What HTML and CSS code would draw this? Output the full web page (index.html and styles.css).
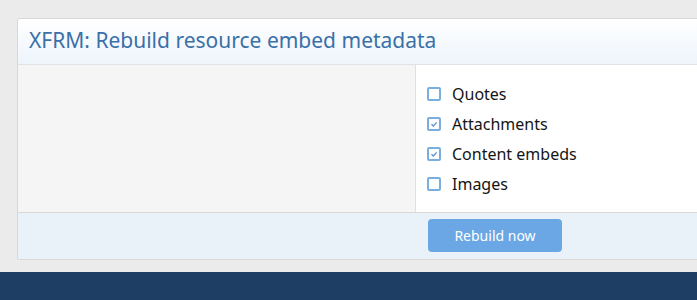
FILE: index.html
```html
<!DOCTYPE html>
<html lang="en">
<head>
    <meta charset="UTF-8">
    <title>Rebuild resource embed metadata</title>
    <link rel="stylesheet" href="styles.css">
</head>
<body>
    <div class="page">
        <div class="block">
            <h2 class="block-header">XFRM: Rebuild resource embed metadata</h2>
            <div class="block-body">
                <div class="row-label"></div>
                <div class="row-input">
                    <label class="check"><span class="box"></span>Quotes</label>
                    <label class="check"><span class="box checked"><svg viewBox="0 0 12 12"><path d="M3 6.2l2.2 2.2L9.2 4" /></svg></span>Attachments</label>
                    <label class="check"><span class="box checked"><svg viewBox="0 0 12 12"><path d="M3 6.2l2.2 2.2L9.2 4" /></svg></span>Content embeds</label>
                    <label class="check"><span class="box"></span>Images</label>
                </div>
            </div>
            <div class="block-footer">
                <div class="row-label"></div>
                <div class="footer-input">
                    <button class="button">Rebuild now</button>
                </div>
            </div>
        </div>
    </div>
    <div class="page-footer"></div>
</body>
</html>
```

FILE: styles.css
```css
* {
    box-sizing: border-box;
    margin: 0;
    padding: 0;
}

body {
    background-color: #ebebeb;
    font-family: 'Noto Sans', 'Open Sans', sans-serif;
    overflow: hidden;
    width: 697px;
    height: 300px;
}

.page {
    padding: 18px 0 12px 17px;
}

.block {
    width: 700px;
    background-color: #fff;
    border: 1px solid #d8d8d8;
    border-right: none;
    border-radius: 3px 0 0 3px;
}

.block-header {
    height: 46px;
    padding: 7px 11px 0;
    font-size: 21px;
    font-weight: 400;
    color: #3a70a8;
    background: linear-gradient(to bottom, #ffffff, #edf4fb);
    border-bottom: 1px solid #dfe3e8;
    border-radius: 3px 0 0 0;
}

.block-body {
    display: flex;
    border-bottom: 1px solid #d8d8d8;
}

.row-label {
    width: 398px;
    background-color: #f5f5f5;
    border-right: 1px solid #e0e0e0;
}

.row-input {
    display: flex;
    flex-direction: column;
    padding: 14px 11px 13px;
}

.check {
    display: flex;
    align-items: center;
    height: 30px;
    font-size: 16px;
    color: #141414;
}

.box {
    width: 14px;
    height: 14px;
    border: 2px solid #7aaee0;
    border-radius: 2px;
    margin-right: 11px;
    display: flex;
    align-items: center;
    justify-content: center;
}

.box svg {
    width: 12px;
    height: 12px;
    fill: none;
    stroke: #5a95d4;
    stroke-width: 1.6;
}

.block-footer {
    display: flex;
    height: 46px;
    background-color: #eaf2f9;
    border-radius: 0 0 0 3px;
}

.block-footer .row-label {
    background: transparent;
    border-right: none;
    width: 399px;
}

.footer-input {
    padding: 6px 11px;
}

.button {
    width: 134px;
    height: 33px;
    background-color: #6aa7e4;
    color: #fff;
    border: none;
    border-radius: 4px;
    font-family: inherit;
    font-size: 14px;
}

.page-footer {
    height: 30px;
    background-color: #1f3e63;
}
```
